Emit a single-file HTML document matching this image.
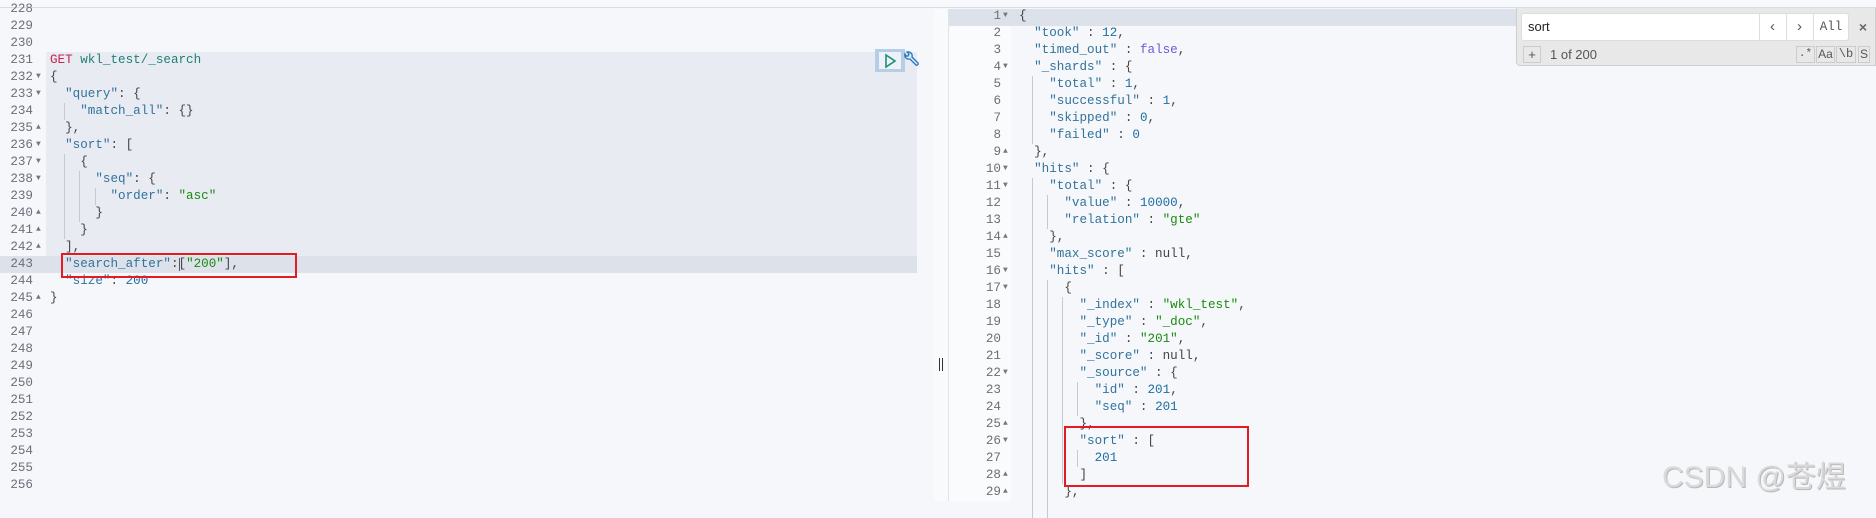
<!DOCTYPE html>
<html><head><meta charset="utf-8"><style>
*{margin:0;padding:0;box-sizing:border-box}
body{width:1876px;height:501px;overflow:hidden;background:#f5f7fa;position:relative;font-family:"Liberation Mono","DejaVu Sans Mono",monospace;font-size:12.6px;color:#444}
.a{position:absolute}
.ln{position:absolute;height:17px;line-height:17px;white-space:pre}
.num{position:absolute;height:17px;line-height:17px;text-align:right;color:#6a6f78}
.k{color:#31739c}.n{color:#1f6ea3}.s{color:#1a8a10}.b{color:#7059d8}.p{color:#444}
.g{position:absolute;width:1px;background:#c5c9d0}
.ar{font-size:8px;color:#777;position:absolute}
</style></head><body>
<div class="a" style="left:0;top:0;width:1876px;height:8px;background:#f8f9fc;border-bottom:1px solid #d8dce6"></div>
<div class="a" style="left:46px;top:52px;width:871px;height:204px;background:#e8ebf2"></div>
<div class="a" style="left:0;top:256px;width:917px;height:17px;background:#dde1ea"></div>
<div class="a" style="left:934px;top:9px;width:14px;height:492px;background:#f9fafc"></div>
<div class="a" style="left:948px;top:9px;width:1px;height:492px;background:#e0e3ea"></div>
<div class="a" style="left:949px;top:9px;width:927px;height:17px;background:#dde1ea"></div>
<div class="a" style="left:949px;top:26px;width:62px;height:475px;background:#fafbfd"></div>
<div class="a" style="left:939px;top:358px;width:1px;height:13px;background:#333"></div>
<div class="a" style="left:942px;top:358px;width:1px;height:13px;background:#333"></div>

<div id="L"></div>
<div class="a" style="left:875px;top:49px;width:30px;height:23px;background:#b6cde6"></div>
<div class="a" style="left:879px;top:52px;width:22px;height:17px;background:#eef2f8"></div>
<svg class="a" style="left:882px;top:52px" width="16" height="18"><path d="M4 3 L13 9 L4 15 Z" fill="none" stroke="#1d8f7a" stroke-width="1.6"/></svg>
<svg class="a" style="left:902px;top:50px" width="18" height="20"><path d="M3 4 a4 4 0 0 0 5 5 l6 6 a1.5 1.5 0 0 0 2 -2 l-6 -6 a4 4 0 0 0 -5 -5 l2 2 -1 2 -2 0z" fill="none" stroke="#2a7cc7" stroke-width="1.4"/></svg>
<div class="a" style="left:61px;top:253px;width:236px;height:25px;border:2px solid #e31b23"></div>

<div id="R"></div>
<div class="a" style="left:1064px;top:426px;width:185px;height:61px;border:2px solid #e31b23"></div>

<div class="a" style="left:1516px;top:8px;width:360px;height:58px;background:#e8e8e8;border:1px solid #cfcfcf;border-top:none;border-radius:0 0 0 4px"></div>
<div class="a" style="left:1521px;top:13px;width:328px;height:28px;background:#fff;border:1px solid #ddd;border-radius:3px"></div>
<div class="a" style="left:1528px;top:13px;line-height:28px;font-family:'Liberation Sans',sans-serif;font-size:13px;color:#222">sort</div>
<div class="a" style="left:1759px;top:14px;width:1px;height:26px;background:#ddd"></div>
<div class="a" style="left:1786px;top:14px;width:1px;height:26px;background:#ddd"></div>
<div class="a" style="left:1813px;top:14px;width:1px;height:26px;background:#ddd"></div>
<div class="a" style="left:1759px;top:13px;width:27px;line-height:28px;text-align:center;font-family:'Liberation Sans',sans-serif;font-size:15px;color:#555">&lsaquo;</div>
<div class="a" style="left:1786px;top:13px;width:27px;line-height:28px;text-align:center;font-family:'Liberation Sans',sans-serif;font-size:15px;color:#555">&rsaquo;</div>
<div class="a" style="left:1813px;top:13px;width:36px;line-height:28px;text-align:center;font-size:12.5px;color:#555">All</div>
<div class="a" style="left:1855px;top:13px;width:16px;line-height:28px;text-align:center;font-family:'Liberation Sans',sans-serif;font-size:14px;color:#666;font-weight:bold">×</div>
<div class="a" style="left:1523px;top:46px;width:18px;height:17px;border:1px solid #ccc;line-height:15px;text-align:center;font-family:'Liberation Sans',sans-serif;font-size:13px;color:#555">+</div>
<div class="a" style="left:1550px;top:46px;line-height:17px;font-family:'Liberation Sans',sans-serif;font-size:13px;color:#555">1 of 200</div>
<div class="a" style="left:1796px;top:46px;width:19px;height:17px;border:1px solid #ccc;line-height:15px;text-align:center;font-size:11px;color:#555">.*</div>
<div class="a" style="left:1816px;top:46px;width:19px;height:17px;border:1px solid #ccc;line-height:15px;text-align:center;font-family:'Liberation Sans',sans-serif;font-size:12px;color:#555">Aa</div>
<div class="a" style="left:1836px;top:46px;width:20px;height:17px;border:1px solid #ccc;line-height:15px;text-align:center;font-size:12px;color:#555">\b</div>
<div class="a" style="left:1858px;top:46px;width:12px;height:17px;border:1px solid #ccc;line-height:15px;text-align:center;font-family:'Liberation Sans',sans-serif;font-size:12px;color:#555">S</div>

<div class="a" style="left:1662px;top:452px;font-family:'Liberation Sans','Noto Sans CJK SC',sans-serif;font-size:30px;color:#dadada;text-shadow:1px 1px 0 #b8b8b8">CSDN @苍煜</div>

<script>
var L=[
[228,'',0],[229,'',0],[230,'',0],
[231,'<span style="color:#c7254e">GET</span> <span style="color:#1e7f75">wkl_test/_search</span>',0],
[232,'{',1],[233,'  <span class="k">"query"</span>: {',1],[234,'    <span class="k">"match_all"</span>: {}',0],
[235,'  },',2],[236,'  <span class="k">"sort"</span>: [',1],[237,'    {',1],[238,'      <span class="k">"seq"</span>: {',1],
[239,'        <span class="k">"order"</span>: <span class="s">"asc"</span>',0],[240,'      }',2],[241,'    }',2],[242,'  ],',2],
[243,'  <span class="k">"search_after"</span>:[<span class="s">"200"</span>],',0],[244,'  <span class="k">"size"</span>: <span class="n">200</span>',0],
[245,'}',2],[246,'',0],[247,'',0],[248,'',0],[249,'',0],[250,'',0],[251,'',0],[252,'',0],[253,'',0],[254,'',0],[255,'',0],[256,'',0]];
var h='';
L.forEach(function(r){var t=1+17*(r[0]-228);
h+='<div class="num" style="left:0;width:33px;top:'+t+'px">'+r[0]+'</div>';
if(r[2])h+='<div class="ar" style="left:36px;top:'+(t+3)+'px">'+(r[2]==1?'▼':'▲')+'</div>';
h+='<div class="ln" style="left:50px;top:'+t+'px">'+r[1]+'</div>';});
function g(x,a,b,off,base){return '<div class="g" style="left:'+x+'px;top:'+(base+17*(a-off))+'px;height:'+(17*(b-a+1))+'px"></div>';}
h+=g(64,234,234,228,1)+g(64,237,241,228,1)+g(79,238,240,228,1)+g(95,239,239,228,1);
h+='<div class="a" style="left:'+(50+7.6*17)+'px;top:258px;width:1px;height:13px;background:#555"></div>';
document.getElementById('L').innerHTML=h;
var R=[
'{','  <span class="k">"took"</span> : <span class="n">12</span>,','  <span class="k">"timed_out"</span> : <span class="b">false</span>,',
'  <span class="k">"_shards"</span> : {','    <span class="k">"total"</span> : <span class="n">1</span>,','    <span class="k">"successful"</span> : <span class="n">1</span>,',
'    <span class="k">"skipped"</span> : <span class="n">0</span>,','    <span class="k">"failed"</span> : <span class="n">0</span>','  },',
'  <span class="k">"hits"</span> : {','    <span class="k">"total"</span> : {','      <span class="k">"value"</span> : <span class="n">10000</span>,',
'      <span class="k">"relation"</span> : <span class="s">"gte"</span>','    },','    <span class="k">"max_score"</span> : null,',
'    <span class="k">"hits"</span> : [','      {','        <span class="k">"_index"</span> : <span class="s">"wkl_test"</span>,',
'        <span class="k">"_type"</span> : <span class="s">"_doc"</span>,','        <span class="k">"_id"</span> : <span class="s">"201"</span>,',
'        <span class="k">"_score"</span> : null,','        <span class="k">"_source"</span> : {','          <span class="k">"id"</span> : <span class="n">201</span>,',
'          <span class="k">"seq"</span> : <span class="n">201</span>','        },','        <span class="k">"sort"</span> : [','          <span class="n">201</span>',
'        ]','      },'];
var F={1:1,4:1,9:2,10:1,11:1,14:2,16:1,17:1,22:1,25:2,26:1,28:2,29:2};
h='';
R.forEach(function(s,i){var n=i+1,t=8+17*i;
h+='<div class="num" style="left:950px;width:51px;top:'+t+'px">'+n+'</div>';
if(F[n])h+='<div class="ar" style="left:1003px;top:'+(t+3)+'px">'+(F[n]==1?'▼':'▲')+'</div>';
h+='<div class="ln" style="left:1019px;top:'+t+'px">'+s+'</div>';});
h+=g(1032,5,8,1,8)+g(1032,11,30,1,8)+g(1047,12,13,1,8)+g(1047,17,30,1,8)+g(1062,18,28,1,8)+g(1077,23,24,1,8)+g(1077,27,27,1,8);
document.getElementById('R').innerHTML=h;
</script>
</body></html>
